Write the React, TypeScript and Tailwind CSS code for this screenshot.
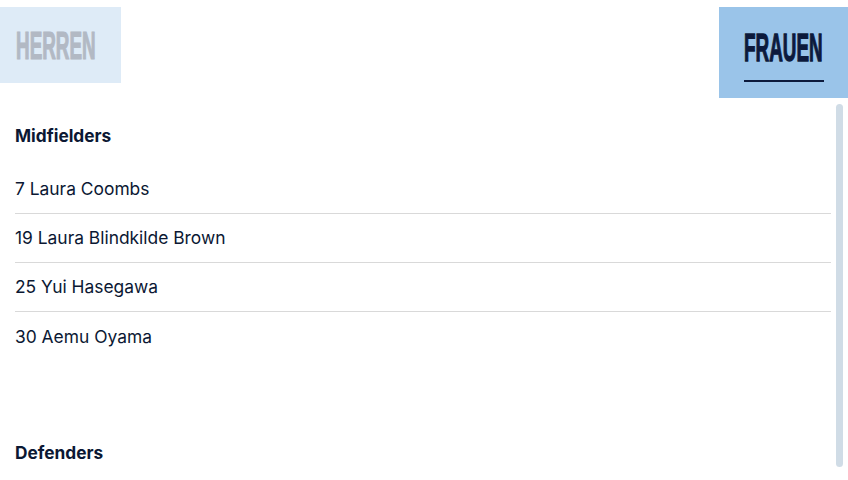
import React from 'react';

const SECTIONS = [
  { title: 'Midfielders', players: ['7 Laura Coombs', '19 Laura Blindkilde Brown', '25 Yui Hasegawa', '30 Aemu Oyama'] },
  { title: 'Defenders', players: [] as string[] },
];

const App: React.FC = () => {
  return (
    <div className="w-[848px] h-[480px] overflow-hidden bg-white font-['Inter',sans-serif] text-[#0b1833]">
      {/* Tabs */}
      <div className="flex justify-between items-start pt-[7px] h-[98px]">
        <button className="h-[76px] w-[121px] bg-[#deebf7] flex items-center pl-[16px] pt-[1px]">
          <span className="block w-[79px] whitespace-nowrap">
            <span className="inline-block origin-left scale-x-[0.51] scale-y-[1.04] font-['Liberation_Sans',sans-serif] font-bold text-[37px] leading-none text-[#b2b9c4] [-webkit-text-stroke:1.2px_#b2b9c4]">
              HERREN
            </span>
          </span>
        </button>
        <button className="h-[91px] w-[129px] bg-[#9ac4e9] flex flex-col items-start pl-[25px] pt-[22px]">
          <span className="block w-[79px] whitespace-nowrap h-[30px]">
            <span className="inline-block origin-left scale-x-[0.51] scale-y-[1.06] font-['Liberation_Sans',sans-serif] font-bold text-[37px] leading-none text-[#0c1a3c] [-webkit-text-stroke:1.2px_#0c1a3c]">
              FRAUEN
            </span>
          </span>
          <span className="block mt-[21px] h-[2px] w-[80px] bg-[#0c1a3c]" />
        </button>
      </div>

      {/* List */}
      <div className="flex h-[382px]">
        <div className="flex-1 pl-[15px] pt-[26px]">
          {SECTIONS.map((section) => (
            <section key={section.title} className="mb-[80px]">
              <h3 className="text-[17.3px] leading-[24px] font-bold mb-[17px]">{section.title}</h3>
              <ul>
                {section.players.map((p, i) => (
                  <li
                    key={p}
                    className={`h-[49px] flex items-center pt-[1px] text-[17.4px] ${
                      i < section.players.length - 1 ? 'border-b border-[#d9d9d9]' : ''
                    }`}
                  >
                    {p}
                  </li>
                ))}
              </ul>
            </section>
          ))}
        </div>
        <div className="w-[17px] pl-[5px] pt-[6px] pb-[13px]">
          <div className="w-[7px] h-full rounded-full bg-[#d0dce6]" />
        </div>
      </div>
    </div>
  );
};

export default App;
